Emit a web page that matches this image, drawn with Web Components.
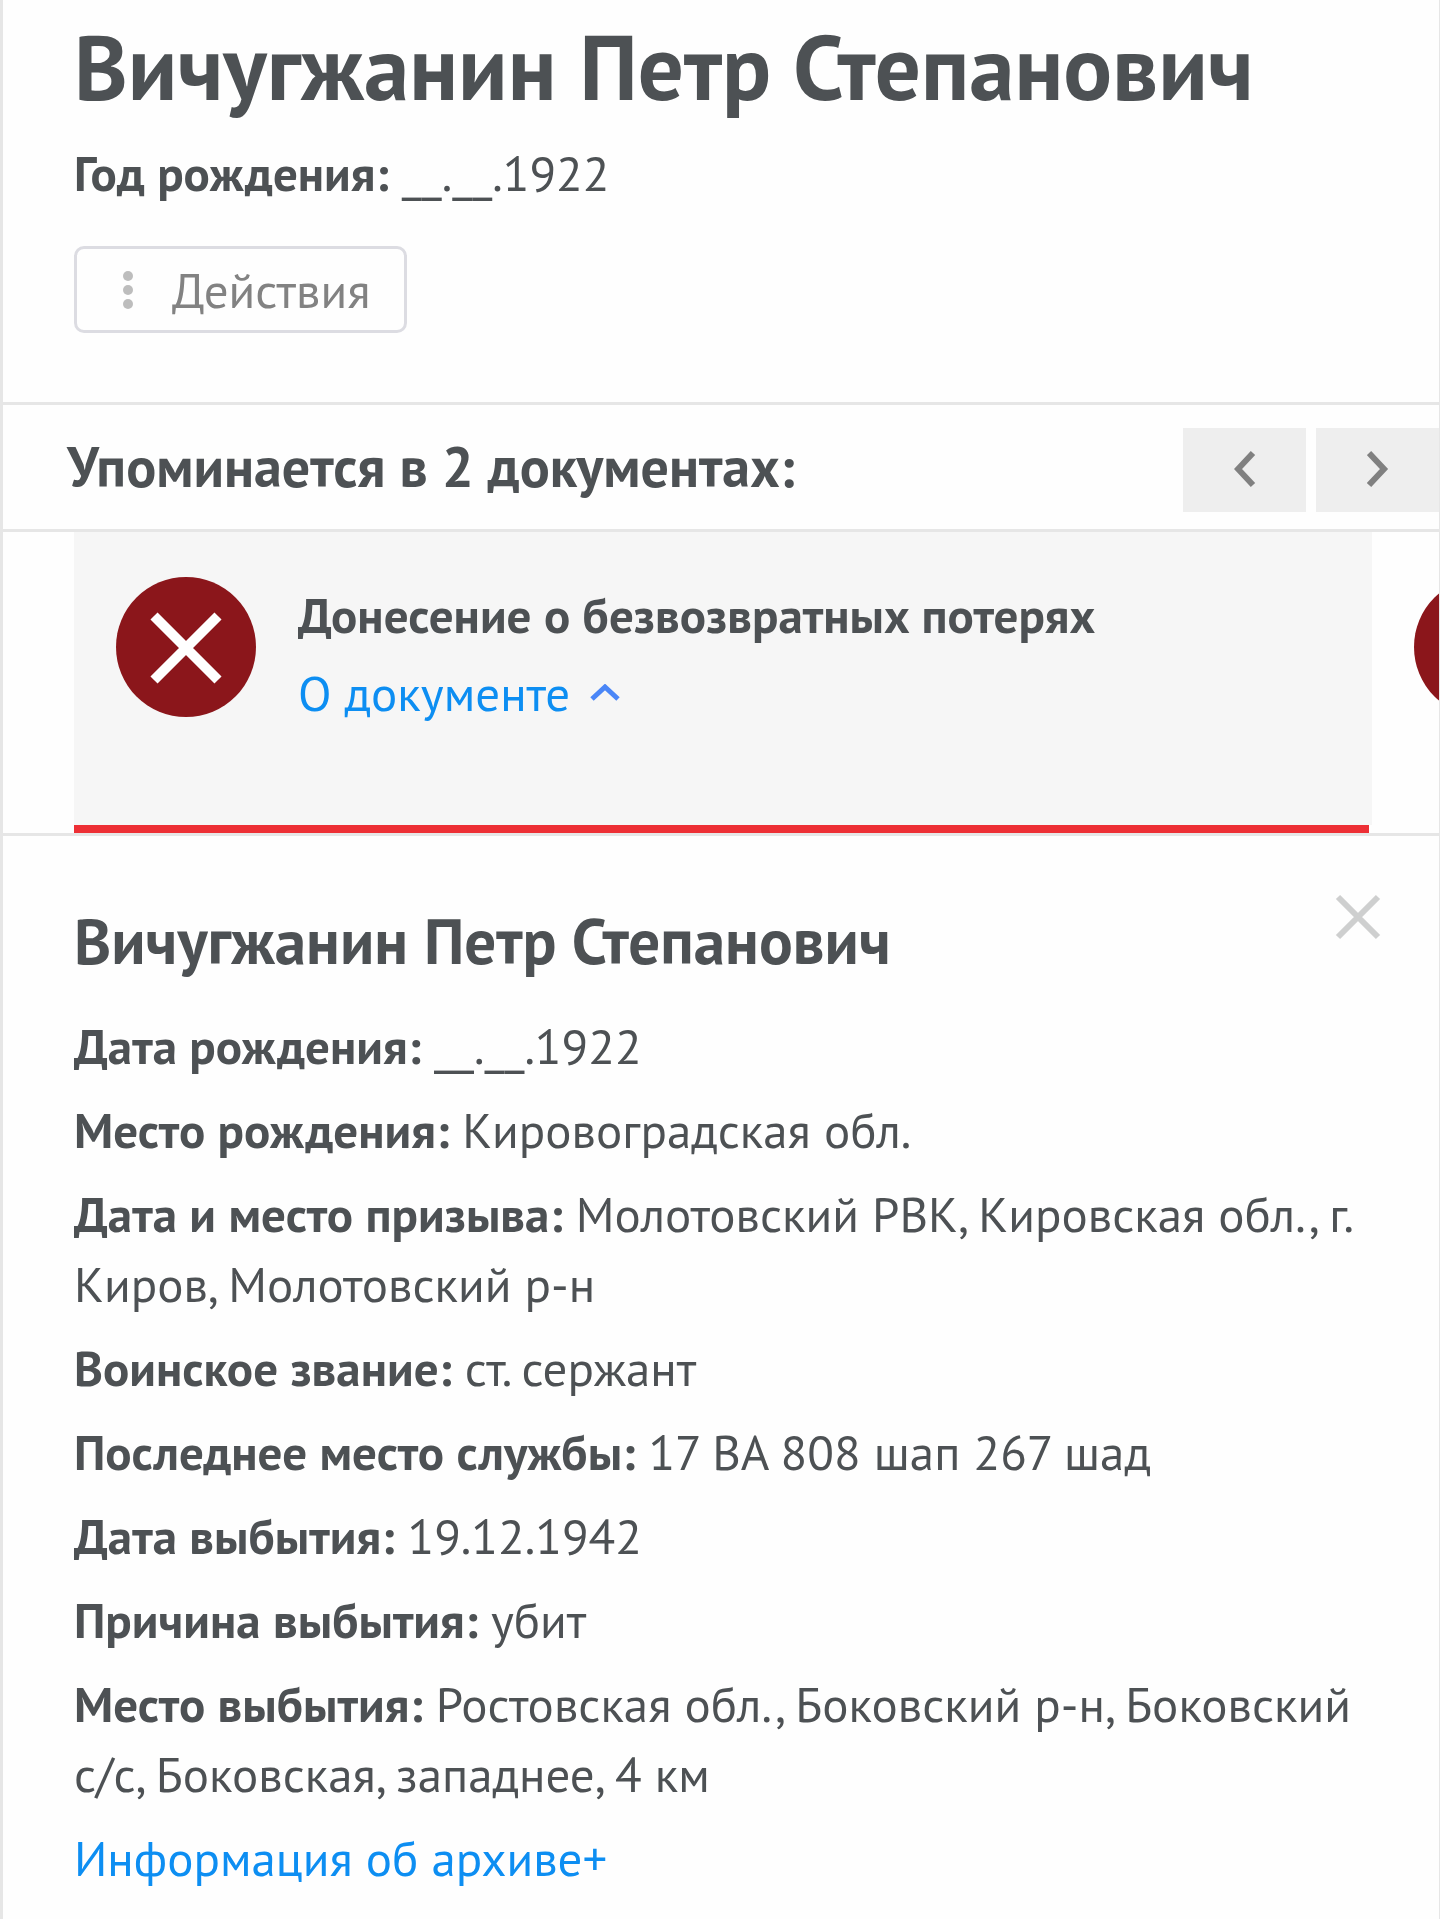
<!DOCTYPE html>
<html lang="ru">
<head>
    <meta charset="utf-8">
    <meta name="viewport" content="width=device-width, initial-scale=1">
    <title>Вичугжанин Петр Степанович</title>
    <style>
        body {
            --text: #4d5154;
            --link: #0d8ef2;
            --line: #e6e6e6;
            margin: 0;
            background: #fefefe;
            color: var(--text);
            font: 49px/70px "PT Sans", Lato, "Noto Sans", sans-serif;
        }
    </style>
</head>
<body>
    <person-page>
        <person-header name="Вичугжанин Петр Степанович">
            <info-row label="Год рождения">__.__.1922</info-row>
        </person-header>
        <document-nav>Упоминается в 2 документах:</document-nav>
        <document-slider>
            <document-card active>
                <span slot="title">Донесение о безвозвратных потерях</span>
                <span slot="link">О документе</span>
            </document-card>
            <document-card></document-card>
        </document-slider>
        <document-details name="Вичугжанин Петр Степанович">
            <info-row label="Дата рождения">__.__.1922</info-row>
            <info-row label="Место рождения">Кировоградская обл.</info-row>
            <info-row label="Дата и место призыва">Молотовский РВК, Кировская обл., г. Киров, Молотовский р-н</info-row>
            <info-row label="Воинское звание">ст. сержант</info-row>
            <info-row label="Последнее место службы">17 ВА 808 шап 267 шад</info-row>
            <info-row label="Дата выбытия">19.12.1942</info-row>
            <info-row label="Причина выбытия">убит</info-row>
            <info-row label="Место выбытия">Ростовская обл., Боковский р-н, Боковский с/с, Боковская, западнее, 4 км</info-row>
        </document-details>
    </person-page>

    <script>
        class PersonPage extends HTMLElement {
            constructor() {
                super();
                this._shadowDOM = this.attachShadow({mode: "open"});
                this._shadowDOM.innerHTML = `
                <style>
                    :host {
                        display: block;
                        box-sizing: border-box;
                        min-height: 100vh;
                        border-left: 3px solid var(--line);
                        border-right: 1px solid var(--line);
                        overflow: hidden;
                    }
                </style>
                <main><slot></slot></main>
                `;
            }
        }

        class InfoRow extends HTMLElement {
            constructor() {
                super();
                this._shadowDOM = this.attachShadow({mode: "open"});
            }

            connectedCallback() {
                this._shadowDOM.innerHTML = `
                <style>
                    :host {
                        display: block;
                    }
                </style>
                <b>${this.getAttribute("label")}:</b> <slot></slot>
                `;
            }
        }

        class PersonHeader extends HTMLElement {
            constructor() {
                super();
                this._shadowDOM = this.attachShadow({mode: "open"});
            }

            connectedCallback() {
                this._shadowDOM.innerHTML = `
                <style>
                    :host {
                        display: block;
                        padding: 16px 58px 69px 71px;
                    }

                    h1 {
                        margin: 0 0 22px;
                        font-size: 91px;
                        line-height: 100px;
                    }

                    button {
                        display: flex;
                        align-items: center;
                        gap: 39px;
                        height: 87px;
                        margin-top: 38px;
                        padding: 0 33px 0 46px;
                        border: 3px solid #dcdce2;
                        border-radius: 10px;
                        background: none;
                        color: #828282;
                        font: inherit;
                    }
                </style>
                <h1>${this.getAttribute("name")}</h1>
                <slot></slot>
                <button type="button">
                    <svg width="10" height="38" viewBox="0 0 10 38" fill="#bdbdbd" aria-hidden="true">
                        <circle cx="5" cy="5" r="5"/>
                        <circle cx="5" cy="19" r="5"/>
                        <circle cx="5" cy="33" r="5"/>
                    </svg>
                    Действия
                </button>
                `;
            }
        }

        class DocumentNav extends HTMLElement {
            constructor() {
                super();
                this._shadowDOM = this.attachShadow({mode: "open"});
                this._shadowDOM.innerHTML = `
                <style>
                    :host {
                        display: flex;
                        align-items: flex-start;
                        justify-content: space-between;
                        padding: 23px 0 17px 64px;
                        border: solid var(--line);
                        border-width: 3px 0;
                    }

                    h3 {
                        margin: 0;
                        font-size: 56px;
                        line-height: 76px;
                    }

                    .arrows {
                        display: flex;
                        gap: 10px;
                    }

                    button {
                        display: flex;
                        align-items: center;
                        justify-content: center;
                        width: 123px;
                        height: 84px;
                        padding: 0;
                        border: 0;
                        background: #eee;
                    }

                    path {
                        fill: none;
                        stroke: #808080;
                        stroke-width: 6;
                    }
                </style>
                <h3><slot></slot></h3>
                <div class="arrows">
                    <button type="button" aria-label="Назад">
                        <svg width="22" height="40" viewBox="0 0 22 40"><path d="M19 3 4 19 19 35"/></svg>
                    </button>
                    <button type="button" aria-label="Вперед">
                        <svg width="22" height="40" viewBox="0 0 22 40"><path d="M2 3 17 19 2 35"/></svg>
                    </button>
                </div>
                `;
            }
        }

        class DocumentSlider extends HTMLElement {
            constructor() {
                super();
                this._shadowDOM = this.attachShadow({mode: "open"});
                this._shadowDOM.innerHTML = `
                <style>
                    :host {
                        display: flex;
                        padding-left: 71px;
                        border-bottom: 3px solid var(--line);
                        overflow: hidden;
                    }

                    /* the edge of the next card stays in view */
                    ::slotted(document-card) {
                        flex: 0 0 calc(100% - 67px);
                    }
                </style>
                <slot></slot>
                `;
            }
        }

        class DocumentCard extends HTMLElement {
            constructor() {
                super();
                this._shadowDOM = this.attachShadow({mode: "open"});
            }

            connectedCallback() {
                const active = this.hasAttribute("active");
                this._shadowDOM.innerHTML = `
                <style>
                    :host {
                        display: block;
                    }

                    .card {
                        display: flex;
                        align-items: flex-start;
                        gap: 42px;
                        padding: 45px 42px 94px;
                    }

                    :host([active]) .card {
                        background: #f6f6f6;
                    }

                    .badge {
                        flex: none;
                    }

                    .info {
                        display: flex;
                        flex-direction: column;
                        gap: 2px;
                        line-height: 76px;
                    }

                    h4 {
                        margin: 0;
                        font-size: inherit;
                    }

                    a {
                        display: flex;
                        align-items: center;
                        gap: 20px;
                        color: var(--link);
                        text-decoration: none;
                    }

                    :host([active])::after {
                        content: "";
                        display: block;
                        height: 8px;
                        margin-right: 3px;
                        background: #ed2f35;
                    }
                </style>
                <div class="card">
                    <svg class="badge" width="140" height="140" viewBox="0 0 140 140" aria-hidden="true">
                        <circle cx="70" cy="70" r="70" fill="#8b161b"/>
                        <path d="M38 39l64 64M102 39l-64 64" stroke="#fff" stroke-width="10"/>
                    </svg>
                    ${active ? `
                    <div class="info">
                        <h4><slot name="title"></slot></h4>
                        <a href="#">
                            <slot name="link"></slot>
                            <svg width="30" height="18" viewBox="0 0 30 18" aria-hidden="true">
                                <path d="M2 15 15 3 28 15" fill="none" stroke="#4a86f7" stroke-width="5"/>
                            </svg>
                        </a>
                    </div>` : ""}
                </div>
                `;
            }
        }

        class DocumentDetails extends HTMLElement {
            constructor() {
                super();
                this._shadowDOM = this.attachShadow({mode: "open"});
            }

            connectedCallback() {
                this._shadowDOM.innerHTML = `
                <style>
                    :host {
                        display: block;
                        padding: 58px 58px 24px 71px;
                    }

                    header {
                        display: flex;
                        align-items: flex-start;
                        justify-content: space-between;
                    }

                    h2 {
                        margin: 0;
                        padding: 12px 0 35px;
                        font-size: 63px;
                        line-height: 70px;
                    }

                    button {
                        display: flex;
                        padding: 0;
                        border: 0;
                        background: none;
                    }

                    .rows {
                        display: flex;
                        flex-direction: column;
                        align-items: flex-start;
                        gap: 14px;
                    }

                    a {
                        color: var(--link);
                        text-decoration: none;
                    }
                </style>
                <header>
                    <h2>${this.getAttribute("name")}</h2>
                    <button type="button" aria-label="Закрыть">
                        <svg width="46" height="46" viewBox="0 0 46 46">
                            <path d="M3 3l40 40M43 3l-40 40" stroke="#cecfcf" stroke-width="6"/>
                        </svg>
                    </button>
                </header>
                <div class="rows">
                    <slot></slot>
                    <a href="#">Информация об архиве+</a>
                </div>
                `;
            }
        }

        customElements.define("person-page", PersonPage)
        customElements.define("info-row", InfoRow)
        customElements.define("person-header", PersonHeader)
        customElements.define("document-nav", DocumentNav)
        customElements.define("document-slider", DocumentSlider)
        customElements.define("document-card", DocumentCard)
        customElements.define("document-details", DocumentDetails)
    </script>
</body>
</html>
